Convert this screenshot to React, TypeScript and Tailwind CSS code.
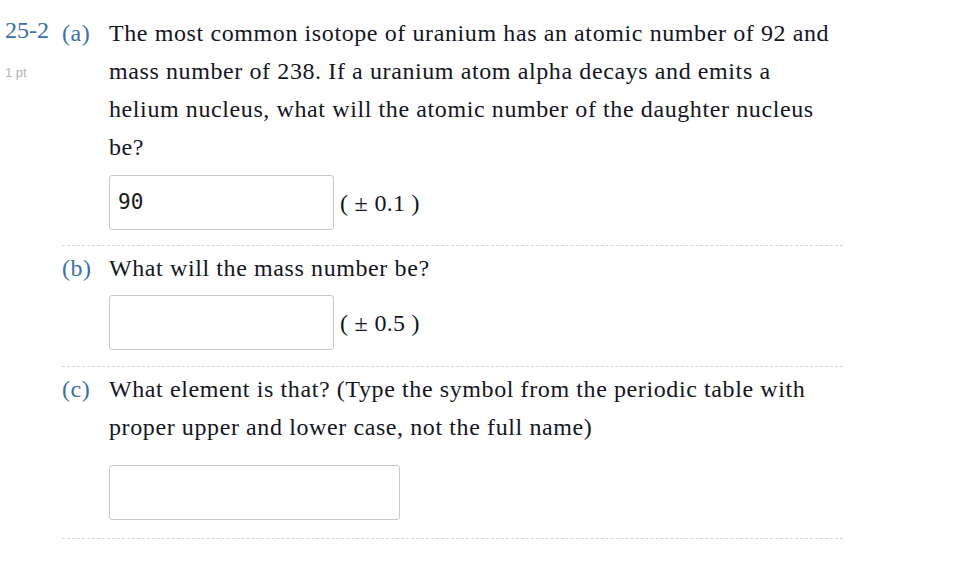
import React from "react";

const serif = { fontFamily: '"Liberation Serif", "Times New Roman", serif' };

function Tolerance({ value }: { value: string }) {
  return (
    <span className="ml-[6px] text-[24px] leading-none tracking-[0.3px] text-[#15151f]">
      ( ± {value} )
    </span>
  );
}

function Part({
  label,
  children,
  className,
}: {
  label: string;
  children: React.ReactNode;
  className?: string;
}) {
  return (
    <div className={"flex border-b border-dashed border-[#d6d6d6] " + (className ?? "")}>
      <div className="w-[47px] shrink-0 text-[#3d6fa6] text-[24px] leading-[38px] tracking-[0.5px]">
        {label}
      </div>
      <div className="flex-1">{children}</div>
    </div>
  );
}

export default function App() {
  return (
    <div className="min-h-screen bg-white flex pt-[14px] pl-[5px]" style={serif}>
      <div className="w-[57px] shrink-0">
        <div className="text-[#3d6fa6] text-[24px] leading-[30px] mt-[1px]">25-2</div>
        <div
          className="mt-[18px] text-[13px] text-[#b5b5b5]"
          style={{ fontFamily: '"Liberation Sans", Arial, sans-serif' }}
        >
          1 pt
        </div>
      </div>

      <div className="w-[781px]">
        <Part label="(a)" className="pb-[15px]">
          <p className="w-[726px] text-[24px] leading-[38px] tracking-[0.6px] text-[#15151f]">
            The most common isotope of uranium has an atomic number of 92 and mass number of 238.
            If a uranium atom alpha decays and emits a helium nucleus, what will the atomic number
            of the daughter nucleus be?
          </p>
          <div className="mt-[9px] flex items-center">
            <div
              className="w-[225px] h-[55px] rounded-[3px] border border-[#c8c8c8] flex items-center px-[8px] text-[21px] text-[#1a1a1a]"
              style={{ fontFamily: '"DejaVu Sans Mono", monospace' }}
            >
              90
            </div>
            <Tolerance value="0.1" />
          </div>
        </Part>

        <Part label="(b)" className="pt-[3px] pb-[16px]">
          <p className="text-[24px] leading-[38px] tracking-[0.6px] text-[#15151f]">
            What will the mass number be?
          </p>
          <div className="mt-[8px] flex items-center">
            <div className="w-[225px] h-[55px] rounded-[3px] border border-[#c8c8c8]" />
            <Tolerance value="0.5" />
          </div>
        </Part>

        <Part label="(c)" className="pt-[3px] pb-[18px]">
          <p className="w-[726px] text-[24px] leading-[38px] tracking-[0.6px] text-[#15151f]">
            What element is that? (Type the symbol from the periodic table with proper upper and
            lower case, not the full name)
          </p>
          <div className="mt-[19px] w-[291px] h-[55px] rounded-[3px] border border-[#c8c8c8]" />
        </Part>
      </div>
    </div>
  );
}
